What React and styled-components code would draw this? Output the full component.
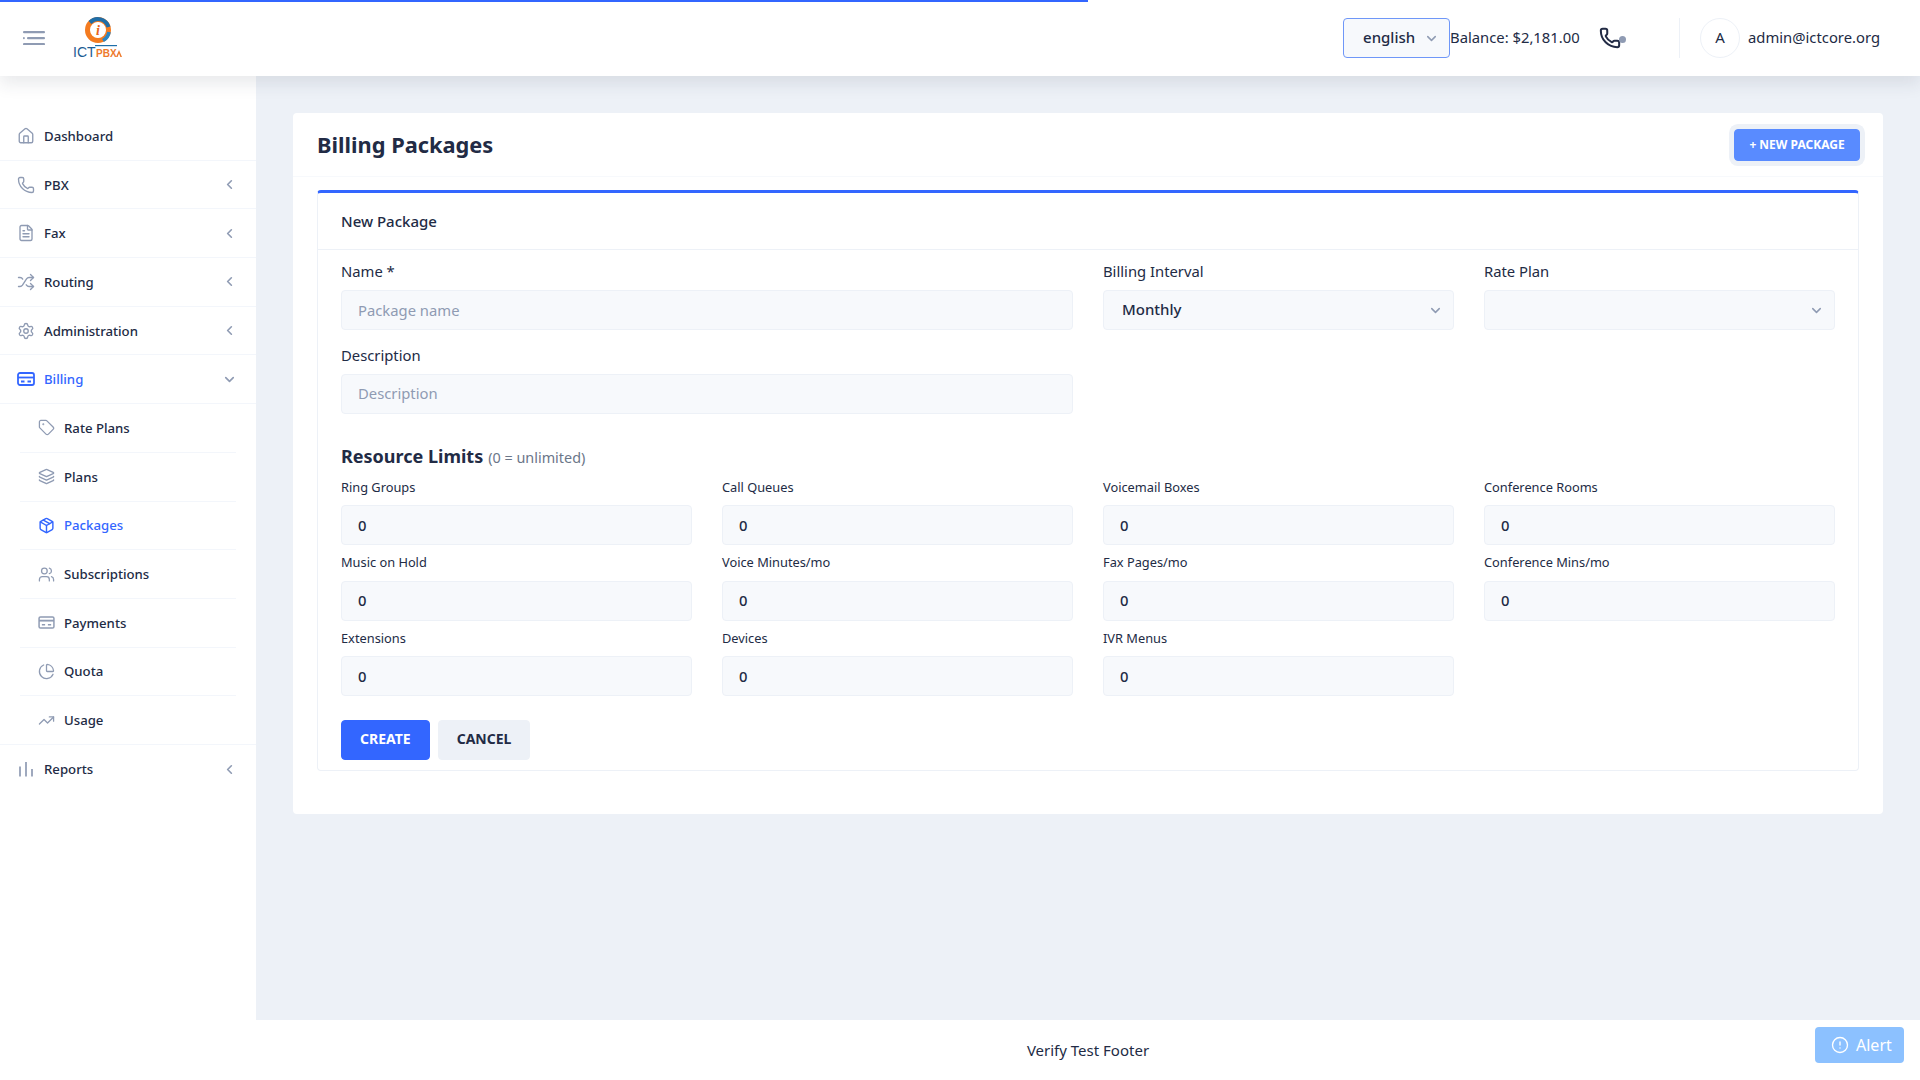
import React from 'react';
import styled, { createGlobalStyle } from 'styled-components';
import {
  AlertCircle,
  ChevronDown,
  ChevronLeft,
  FileText,
  Home,
  Layers,
  Package,
  PieChart,
  Phone,
  Settings,
  Shuffle,
  Tag,
  TrendingUp,
  Users,
} from 'lucide-react';

const GlobalStyle = createGlobalStyle`
  * {
    box-sizing: border-box;
  }

  body {
    margin: 0;
    background: #edf1f7;
    color: #222b45;
    font-family: "Noto Sans", "Open Sans", sans-serif;
  }
`;

const Page = styled.div`
  position: relative;
  display: flex;
  flex-direction: column;
  min-height: 100vh;
`;

const ProgressBar = styled.div`
  position: absolute;
  top: 0;
  left: 0;
  z-index: 5;
  width: 1088px;
  height: 2px;
  background: #3366ff;
`;

const Header = styled.header`
  position: relative;
  z-index: 3;
  display: flex;
  align-items: center;
  height: 76px;
  padding: 0 40px 0 23px;
  background: #fff;
  box-shadow: 0 8px 16px 0 rgba(44, 51, 73, 0.1);
`;

const MenuButton = styled.div`
  display: flex;
  width: 22px;
  height: 14px;
  margin-right: 28px;
  color: #8f9bb3;
`;

const LogoWrap = styled.div`
  display: flex;
  width: 50px;
  height: 42px;
`;

const HeaderRight = styled.div`
  display: flex;
  align-items: center;
  margin-left: auto;
`;

const LangSelect = styled.div`
  display: flex;
  align-items: center;
  justify-content: space-between;
  width: 107px;
  height: 40px;
  padding: 0 10px 2px 19px;
  border: 1px solid #6f97f8;
  border-radius: 4px;
  background: #f7f9fc;
  font-size: 15px;
  font-weight: 500;
  color: #222b45;
`;

const Balance = styled.span`
  width: 149px;
  padding-bottom: 2px;
  font-size: 14.8px;
  color: #222b45;
  white-space: nowrap;
`;

const CallIcon = styled.div`
  position: relative;
  display: flex;
  align-items: center;
  width: 24px;
  height: 24px;
  margin-right: 56px;
  color: #222b45;
`;

const StatusDot = styled.span`
  position: absolute;
  right: -3px;
  bottom: 7px;
  width: 7px;
  height: 7px;
  border-radius: 50%;
  background: #8f9bb3;
`;

const UserBlock = styled.div`
  display: flex;
  align-items: center;
  gap: 8px;
  height: 40px;
  padding-left: 20px;
  border-left: 1px solid #edf1f7;
`;

const Avatar = styled.div`
  display: flex;
  align-items: center;
  justify-content: center;
  width: 40px;
  height: 40px;
  padding-bottom: 2px;
  border: 1px solid #edf1f7;
  border-radius: 50%;
  font-size: 15px;
`;

const UserEmail = styled.span`
  padding-bottom: 2px;
  font-size: 14.8px;
`;

const Body = styled.div`
  display: flex;
  flex: 1;
`;

const Sidebar = styled.nav`
  flex: 0 0 256px;
  padding-top: 36px;
  background: #fff;
`;

const Row = styled.div`
  display: flex;
  align-items: center;
  height: 48.7px;
  margin: ${(p) => (p.$sub ? '0 20px' : '0')};
  padding: ${(p) => {
    if (p.$sub) return '0 0 0 16px';
    if (p.$wide) return '0 19px 0 36px';
    return '0 19px 0 16px';
  }};
  border-bottom: ${(p) => (p.$last ? 'none' : '1px solid #f3f6fb')};
  color: ${(p) => (p.$active ? '#3366ff' : '#222b45')};
  font-size: 13.2px;
  font-weight: 500;
`;

const RowIcon = styled.span`
  display: flex;
  align-items: center;
  justify-content: center;
  flex: 0 0 20px;
  height: 20px;
  margin-right: 8px;
  color: ${(p) => (p.$active ? '#3366ff' : '#8f9bb3')};
`;

const RowChevron = styled.span`
  display: flex;
  margin-left: auto;
  color: #8f9bb3;
`;

const Main = styled.main`
  display: flex;
  flex: 1;
  flex-direction: column;
  min-width: 0;
`;

const Content = styled.div`
  flex: 1;
  padding: 37px;
`;

const Card = styled.section`
  border-radius: 4px;
  background: #fff;
  padding-bottom: 43px;
`;

const CardHeader = styled.div`
  display: flex;
  align-items: center;
  justify-content: space-between;
  height: 64px;
  padding: 0 23px 0 24px;
  border-bottom: 1px solid #f7f9fc;
`;

const Title = styled.h1`
  margin: 0;
  font-size: 21.8px;
  font-weight: 700;
  line-height: 32px;
  color: #222b45;
`;

const NewButton = styled.button`
  width: 126px;
  height: 32px;
  border: 1px solid #598bff;
  border-radius: 4px;
  background: #598bff;
  box-shadow: 0 0 0 5px #edf1f7;
  color: #fff;
  font-family: inherit;
  font-size: 12px;
  font-weight: 700;
  text-transform: uppercase;
`;

const FormCard = styled.div`
  margin: 12.5px 24px 0;
  border: 1px solid #edf1f7;
  border-top: 3px solid #3366ff;
  border-radius: 4px;
`;

const FormHeader = styled.div`
  display: flex;
  align-items: center;
  height: 57.5px;
  padding: 0 23px;
  border-bottom: 1px solid #edf1f7;
  font-size: 15px;
  font-weight: 500;
`;

const FormBody = styled.div`
  padding: 10px 18px 10px 23px;
`;

const Grid = styled.div`
  display: grid;
  grid-template-columns: repeat(4, 351px);
  column-gap: 30px;
`;

const Field = styled.div`
  display: flex;
  flex-direction: column;
  grid-column: span ${(p) => p.$span || 1};
  margin-bottom: ${(p) => p.$gap || 0}px;
`;

const FieldLabel = styled.label`
  height: ${(p) => (p.$small ? '20px' : '24px')};
  margin-bottom: ${(p) => (p.$small ? '7.5px' : '6px')};
  font-size: ${(p) => (p.$small ? '12.8px' : '14.8px')};
  line-height: ${(p) => (p.$small ? '19px' : '22px')};
  color: #222b45;
`;

const Input = styled.input`
  width: 100%;
  height: 40px;
  padding: 0 16px 1px;
  border: 1px solid #edf1f7;
  border-radius: 4px;
  outline: none;
  background: #f7f9fc;
  color: #222b45;
  font-family: inherit;
  font-size: 14.8px;
  font-weight: ${(p) => (p.$value ? 500 : 400)};

  &::placeholder {
    color: #8f9bb3;
    font-weight: 400;
  }
`;

const SelectBox = styled.div`
  display: flex;
  align-items: center;
  justify-content: space-between;
  height: 40px;
  padding: 0 10px 2px 18px;
  border: 1px solid #edf1f7;
  border-radius: 4px;
  background: #f7f9fc;
  font-size: 15px;
  font-weight: 500;
  color: #222b45;
`;

const SelectArrow = styled.span`
  display: flex;
  margin-top: 2px;
  margin-left: auto;
  color: #8f9bb3;
`;

const SectionTitle = styled.h3`
  display: flex;
  align-items: baseline;
  gap: 5px;
  height: 24px;
  margin: 30.5px 0 9.5px;
  font-size: 18px;
  font-weight: 700;
  line-height: 24px;
`;

const SectionHint = styled.small`
  font-size: 14.4px;
  font-weight: 400;
  color: #6b7689;
`;

const Actions = styled.div`
  display: flex;
  gap: 8px;
  margin-top: 15.5px;
`;

const ActionButton = styled.button`
  height: 40px;
  padding: 0 18px 2px;
  border: 1px solid ${(p) => (p.$primary ? '#3366ff' : '#edf1f7')};
  border-radius: 4px;
  background: ${(p) => (p.$primary ? '#3366ff' : '#edf1f7')};
  color: ${(p) => (p.$primary ? '#fff' : '#222b45')};
  font-family: inherit;
  font-size: 14px;
  font-weight: 700;
  text-transform: uppercase;
`;

const Footer = styled.footer`
  display: flex;
  align-items: center;
  justify-content: center;
  height: 61px;
  padding-bottom: 1px;
  border-top: 1px solid #edf1f7;
  background: #fff;
  font-size: 15px;
  color: #222b45;
`;

const AlertButton = styled.div`
  position: fixed;
  right: 16px;
  bottom: 17px;
  z-index: 4;
  display: flex;
  align-items: center;
  gap: 7px;
  width: 89px;
  height: 36px;
  padding-left: 16px;
  border-radius: 4px;
  background: #8cc1ff;
  color: #fff;
  font-size: 16px;
`;

function MenuIcon() {
  return (
    <svg viewBox="0 0 22 14" width="22" height="14" fill="currentColor">
      <rect x="0" y="0" width="22" height="2.2" rx="1" />
      <rect x="0" y="6" width="1.8" height="2.2" rx="0.9" />
      <rect x="4" y="6" width="18" height="2.2" rx="1" />
      <rect x="0" y="12" width="22" height="2.2" rx="1" />
    </svg>
  );
}

function Logo() {
  return (
    <svg viewBox="0 0 50 42" width="50" height="42" overflow="visible">
      <circle cx="25" cy="13" r="10.5" fill="none" stroke="#f47b20" strokeWidth="5" />
      <path d="M17 5.5A11 11 0 0 1 35.5 10" fill="none" stroke="#1f6ea8" strokeWidth="4" />
      <path d="M30 23.5A11.5 11.5 0 0 0 36 15" fill="none" stroke="#2b86c5" strokeWidth="3.6" />
      <circle cx="25" cy="13" r="7.4" fill="#fff" />
      <text
        x="25"
        y="18"
        textAnchor="middle"
        fontFamily="Liberation Serif, serif"
        fontStyle="italic"
        fontWeight="700"
        fontSize="14"
        fill="#e8641b"
      >
        i
      </text>
      <rect x="22" y="28" width="22" height="1.2" fill="#1f6ea8" />
      <text x="0" y="40" fontFamily="Liberation Sans, sans-serif" fontSize="14" fill="#1b5c94">
        ICT
      </text>
      <text x="23" y="40" fontFamily="Liberation Sans, sans-serif" fontWeight="700" fontSize="10" fill="#ee7a2d">
        PBX
      </text>
      <path d="M43 40l3-7 3 7h-1.6l-1.4-3.400-1.400 3.400z" fill="#ee7a2d" />
    </svg>
  );
}

function BillingCard() {
  return (
    <svg viewBox="0 0 18 14" width="18" height="14" fill="none" stroke="currentColor" strokeWidth="1.8">
      <rect x="1" y="1" width="16" height="12" rx="2" />
      <path d="M1 5.5h16" />
      <path d="M4 9.5h3.5M10.5 9.5h3.5" />
    </svg>
  );
}

function PaymentCard() {
  return (
    <svg viewBox="0 0 18 14" width="17" height="13" fill="none" stroke="currentColor" strokeWidth="1.6">
      <rect x="1" y="1" width="16" height="12" rx="1.5" />
      <path d="M1 5h16" strokeWidth="2" />
      <path d="M4 9.5h3.5M10.5 9.5h3.5" />
    </svg>
  );
}

function BarsIcon() {
  return (
    <svg viewBox="0 0 16 16" width="16" height="16" fill="none" stroke="currentColor" strokeWidth="1.7">
      <path d="M2 5.500v10M8 1v14.500M14 8v7.500" />
    </svg>
  );
}

const MENU = [
  { label: 'Dashboard', icon: <Home size={18} strokeWidth={1.8} /> },
  { label: 'PBX', icon: <Phone size={18} strokeWidth={1.8} />, arrow: 'left' },
  { label: 'Fax', icon: <FileText size={18} strokeWidth={1.8} />, arrow: 'left' },
  { label: 'Routing', icon: <Shuffle size={18} strokeWidth={1.8} />, arrow: 'left' },
  { label: 'Administration', icon: <Settings size={18} strokeWidth={1.8} />, arrow: 'left' },
  { label: 'Billing', icon: <BillingCard />, arrow: 'down', active: true },
  { label: 'Rate Plans', icon: <Tag size={17} strokeWidth={1.8} />, sub: true },
  { label: 'Plans', icon: <Layers size={17} strokeWidth={2} />, sub: true },
  { label: 'Packages', icon: <Package size={17} strokeWidth={2} />, sub: true, active: true },
  { label: 'Subscriptions', icon: <Users size={17} strokeWidth={1.8} />, sub: true },
  { label: 'Payments', icon: <PaymentCard />, sub: true },
  { label: 'Quota', icon: <PieChart size={17} strokeWidth={1.8} />, sub: true },
  { label: 'Usage', icon: <TrendingUp size={17} strokeWidth={1.8} />, wide: true },
  { label: 'Reports', icon: <BarsIcon />, arrow: 'left', last: true },
];

const LIMITS = [
  'Ring Groups',
  'Call Queues',
  'Voicemail Boxes',
  'Conference Rooms',
  'Music on Hold',
  'Voice Minutes/mo',
  'Fax Pages/mo',
  'Conference Mins/mo',
  'Extensions',
  'Devices',
  'IVR Menus',
];

export default function App() {
  return (
    <Page>
      <GlobalStyle />
      <ProgressBar />
      <Header>
        <MenuButton>
          <MenuIcon />
        </MenuButton>
        <LogoWrap>
          <Logo />
        </LogoWrap>
        <HeaderRight>
          <LangSelect>
            english
            <SelectArrow>
              <ChevronDown size={15} strokeWidth={2.4} />
            </SelectArrow>
          </LangSelect>
          <Balance>Balance: $2,181.00</Balance>
          <CallIcon>
            <Phone size={22} strokeWidth={2.2} />
            <StatusDot />
          </CallIcon>
          <UserBlock>
            <Avatar>A</Avatar>
            <UserEmail>admin@ictcore.org</UserEmail>
          </UserBlock>
        </HeaderRight>
      </Header>
      <Body>
        <Sidebar>
          {MENU.map((item) => (
            <Row key={item.label} $sub={item.sub} $wide={item.wide} $active={item.active} $last={item.last}>
              <RowIcon $active={item.active}>{item.icon}</RowIcon>
              {item.label}
              {item.arrow && (
                <RowChevron>
                  {item.arrow === 'left' ? (
                    <ChevronLeft size={15} strokeWidth={2.6} />
                  ) : (
                    <ChevronDown size={15} strokeWidth={2.6} />
                  )}
                </RowChevron>
              )}
            </Row>
          ))}
        </Sidebar>
        <Main>
          <Content>
            <Card>
              <CardHeader>
                <Title>Billing Packages</Title>
                <NewButton type="button">+ New Package</NewButton>
              </CardHeader>
              <FormCard>
                <FormHeader>New Package</FormHeader>
                <FormBody>
                  <Grid>
                    <Field $span={2} $gap={13.5}>
                      <FieldLabel>Name *</FieldLabel>
                      <Input placeholder="Package name" />
                    </Field>
                    <Field $gap={13.5}>
                      <FieldLabel>Billing Interval</FieldLabel>
                      <SelectBox>
                        Monthly
                        <SelectArrow>
                          <ChevronDown size={15} strokeWidth={2.4} />
                        </SelectArrow>
                      </SelectBox>
                    </Field>
                    <Field $gap={13.5}>
                      <FieldLabel>Rate Plan</FieldLabel>
                      <SelectBox>
                        <SelectArrow>
                          <ChevronDown size={15} strokeWidth={2.4} />
                        </SelectArrow>
                      </SelectBox>
                    </Field>
                    <Field $span={2}>
                      <FieldLabel>Description</FieldLabel>
                      <Input placeholder="Description" />
                    </Field>
                  </Grid>
                  <SectionTitle>
                    Resource Limits <SectionHint>(0 = unlimited)</SectionHint>
                  </SectionTitle>
                  <Grid>
                    {LIMITS.map((label) => (
                      <Field key={label} $gap={8}>
                        <FieldLabel $small>{label}</FieldLabel>
                        <Input $value defaultValue="0" />
                      </Field>
                    ))}
                  </Grid>
                  <Actions>
                    <ActionButton type="button" $primary>
                      Create
                    </ActionButton>
                    <ActionButton type="button">Cancel</ActionButton>
                  </Actions>
                </FormBody>
              </FormCard>
            </Card>
          </Content>
          <Footer>Verify Test Footer</Footer>
        </Main>
      </Body>
      <AlertButton>
        <AlertCircle size={18} strokeWidth={1.8} />
        Alert
      </AlertButton>
    </Page>
  );
}
